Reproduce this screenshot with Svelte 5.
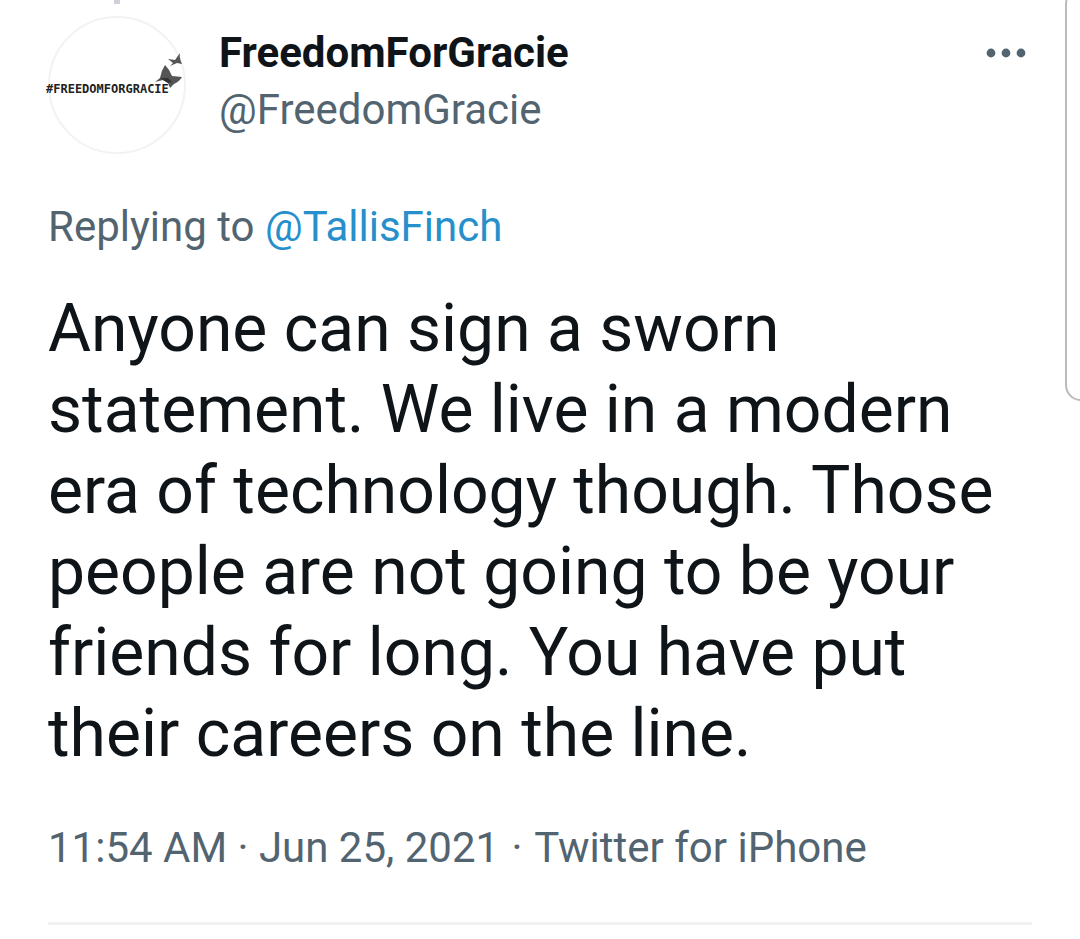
<script>
	const tweet = {
		name: "FreedomForGracie",
		handle: "@FreedomGracie",
		replyingTo: "@TallisFinch",
		text: "Anyone can sign a sworn statement. We live in a modern era of technology though. Those people are not going to be your friends for long. You have put their careers on the line.",
		time: "11:54 AM · Jun 25, 2021",
		source: "Twitter for iPhone",
	};
</script>

<div class="page">
	<article class="tweet">
		<div class="thread-line"></div>
		<header>
			<a class="avatar" href="#profile" aria-label={tweet.name}>
				<svg viewBox="0 0 138 138" aria-hidden="true">
					<circle cx="69" cy="69" r="68" fill="#fff" stroke="#f2f2f2" stroke-width="2" />
					<text x="-2" y="77" fill="#222">#FREEDOMFORGRACIE</text>
					<!-- butterflies -->
					<path d="M120 43L127 44L132 37Q131 42 134 48L129 47L122 50L125 47Z" fill="#555" />
					<path d="M117 49Q122 54 124 60L134 61Q131 66 126 68L122 72L120 67L115 64L107 66L112 62Q113 55 117 49Z" fill="#555" />
					<path d="M112 62L120 62L124 66L120 67L115 64Z" fill="#333" />
				</svg>
			</a>
			<div class="names">
				<a class="name" href="#profile">{tweet.name}</a>
				<a class="handle" href="#profile">{tweet.handle}</a>
			</div>
			<button class="more" aria-label="More">
				<svg viewBox="0 0 42 10" aria-hidden="true">
					<circle cx="6" cy="5" r="4.4" />
					<circle cx="21" cy="5" r="4.4" />
					<circle cx="36" cy="5" r="4.4" />
				</svg>
			</button>
		</header>

		<p class="reply">Replying to <a href="#reply">{tweet.replyingTo}</a></p>
		<p class="text">{tweet.text}</p>
		<p class="meta">{tweet.time} <span class="dot">·</span> {tweet.source}</p>
	</article>
	<div class="edge"></div>
</div>

<style>
	:global(body) {
		background: #fff;
	}

	.page {
		position: relative;
		overflow: hidden;
		font-family: Roboto, "Liberation Sans", sans-serif;
		color: #0f1419;
	}

	.tweet {
		padding: 0 48px 16px;
	}

	.thread-line {
		width: 6px;
		height: 4px;
		margin: 0 0 12px 66px;
		background: #d0d1d8;
	}

	header {
		display: flex;
		align-items: flex-start;
	}

	.avatar svg {
		display: block;
		width: 138px;
		height: 138px;
		overflow: visible;
	}

	.avatar text {
		font-family: "DejaVu Sans Mono", monospace;
		font-size: 12px;
		font-weight: 700;
	}

	.names {
		display: flex;
		flex: 1;
		flex-direction: column;
		margin: 8px 0 0 33px;
		font-size: 42px;
		line-height: 57px;
	}

	a {
		color: inherit;
		text-decoration: none;
	}

	.name {
		font-weight: 700;
	}

	.handle {
		color: #536471;
	}

	.more {
		margin: 32px 5px 0 0;
		padding: 0;
		border: none;
		background: none;
		cursor: pointer;
	}

	.more svg {
		display: block;
		width: 42px;
		height: 10px;
		fill: #536471;
	}

	p {
		margin: 0;
	}

	.reply {
		margin-top: 45px;
		color: #536471;
		font-size: 42px;
		line-height: 56px;
	}

	.reply a {
		color: #2790cc;
	}

	.text {
		margin-top: 33px;
		font-size: 66px;
		line-height: 81px;
	}

	.meta {
		margin-top: 46px;
		padding-bottom: 46px;
		border-bottom: 3px solid #eff1f2;
		color: #536471;
		font-size: 42px;
		line-height: 56px;
	}

	.dot {
		padding: 0 2px;
	}

	.edge {
		position: absolute;
		top: -12px;
		right: -20px;
		width: 31px;
		height: 409px;
		border: 2px solid #bbb;
		border-radius: 16px;
	}
</style>
